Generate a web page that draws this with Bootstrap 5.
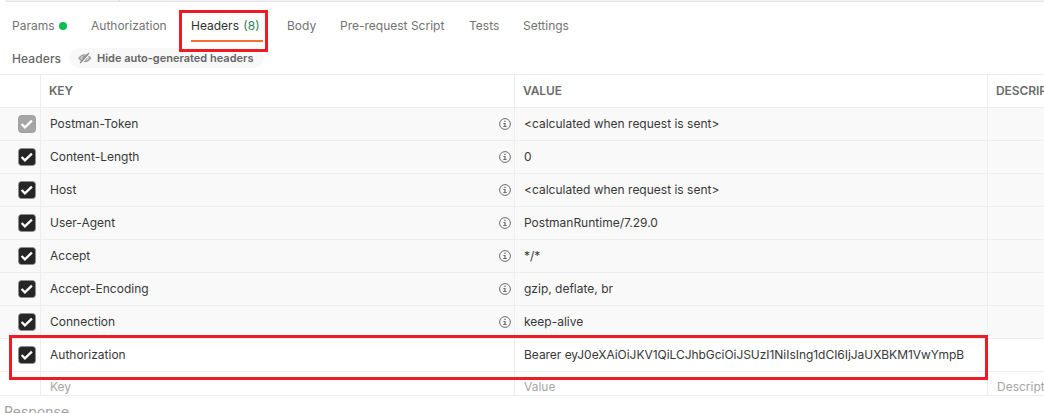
<!DOCTYPE html>
<html lang="en">
<head>
<meta charset="utf-8">
<title>Request headers</title>
<link rel="stylesheet" href="https://cdn.jsdelivr.net/npm/bootstrap@5.3.0/dist/css/bootstrap.min.css">
<style>
body{font-family:Inter,"Open Sans",sans-serif;font-size:12px;line-height:16px;color:#383838;background:#fff;height:413px;overflow:hidden}
.url-bar{height:2px;margin-left:5px;background:#f2f2f2;border-bottom:1px solid #e3e3e3;border-bottom-left-radius:3px}
.url-method{width:115px;border-right:1px solid #dcdcdc}
.request-tabs{height:46px;padding-left:12px;color:#737373}
.request-tabs .nav-link{padding:16px 0 6px;color:inherit;height:40px}
.request-tabs .nav-item{flex:none}
.tab-params{width:79px}.tab-auth{width:100px}.tab-headers{width:96px}.tab-body{width:53px}.tab-script{width:129px}.tab-tests{width:54px}
.request-tabs .nav-link.active{width:72px;border-bottom:2px solid #ff6c37;color:#303030}
.request-tabs .count{color:#2b8055;margin-left:1px}
.dot{width:8px;height:8px;background:#0cbb52;margin:4px 0 0 4.500px}
.sub-bar{height:26px;padding-left:12px}
.sub-title{width:57px;font-weight:500;font-size:12px;letter-spacing:.1px;color:#666;padding-top:3px}
.toggle-pill{height:20px;width:195px;background:#f8f8f8;font-size:11px;font-weight:600;color:#666;padding-left:9px}
.toggle-pill svg{margin-right:5px}
.kv-grid{border-top:1px solid #ededed}
.kv-row{display:grid;grid-template-columns:41px 474px 473px 1fr;height:33px;border-bottom:1px solid #ededed}
.kv-row>div{border-right:1px solid #ededed;padding-left:9px;display:flex;align-items:center;white-space:nowrap;overflow:hidden}
.kv-row>div:last-child{border-right:0}
.kv-row>div:first-child{padding-left:18px}
.kv-head{font-weight:600;color:#6b6b6b;letter-spacing:-.1px}
.kv-head>div{padding-left:8px}
.auto{background:#f9f9f9}
.token{letter-spacing:-.04px}
.kv-new{height:24px;color:#a6a6a6}
.kv-new>div{padding-top:7px}
.info{margin-left:auto;margin-right:3px}
.response{font-size:14px;line-height:20px;color:#a0a0a0;padding:6px 0 0 4px}
.mark-box{position:absolute;border:3px solid #ed1c24}
.mark-tab{left:179px;top:10px;width:89px;height:42px}
.mark-row{left:9px;top:335px;width:979px;height:45px}
</style>
</head>
<body>
<svg class="d-none">
<symbol id="check" viewBox="0 0 18 18"><rect x=".5" y=".5" width="17" height="17" rx="3" fill="currentColor" stroke="#8d8d8d" stroke-opacity=".7"/><path d="M3.600 9l3.300 3.300 7-6.700" fill="none" stroke="#fff" stroke-width="2.300"/></symbol>
<symbol id="info" viewBox="0 0 12 12"><circle cx="6" cy="6" r="5.4" fill="none" stroke="#6b6b6b"/><path d="M5.300 2.800h1.300v1.200h-1.300zM4.400 5h2.200v3.100h1v.9H4.300v-.9h1.100V5.900h-1z" fill="#6b6b6b"/></symbol>
</svg>
<div class="url-bar d-flex"><div class="url-method"></div></div>
<ul class="nav request-tabs flex-nowrap">
<li class="nav-item tab-params"><a class="nav-link d-flex align-items-start"><span>Params</span><span class="dot rounded-circle"></span></a></li>
<li class="nav-item tab-auth"><a class="nav-link">Authorization</a></li>
<li class="nav-item tab-headers"><a class="nav-link active">Headers <span class="count">(8)</span></a></li>
<li class="nav-item tab-body"><a class="nav-link">Body</a></li>
<li class="nav-item tab-script"><a class="nav-link">Pre-request Script</a></li>
<li class="nav-item tab-tests"><a class="nav-link">Tests</a></li>
<li class="nav-item"><a class="nav-link">Settings</a></li>
</ul>
<div class="sub-bar d-flex align-items-start">
<div class="sub-title">Headers</div>
<div class="toggle-pill rounded-pill d-flex align-items-center">
<svg width="14" height="12" viewBox="0 0 14 12"><path d="M1 6.200Q3.300 2.800 6.800 2.800T12.600 6.200Q10.300 9.600 6.800 9.600T1 6.200z" fill="#d0d0d0" stroke="#9b9b9b" stroke-width="1.300"/><circle cx="6.800" cy="6.200" r="2.300" fill="#969696"/><path d="M3.300 11.500L11.900 1.700" stroke="#f8f8f8" stroke-width="1.300"/><path d="M2.200 11L10.900 1" stroke="#8b8b8b" stroke-width="1.300"/></svg>
<span>Hide auto-generated headers</span></div>
</div>
<main class="kv-grid" id="grid">
<div class="kv-row kv-head"><div></div><div>KEY</div><div>VALUE</div><div>DESCRIPTION</div></div>
</main>
<div class="response">Response</div>
<div class="mark-box mark-tab"></div>
<div class="mark-box mark-row"></div>
<script src="https://cdn.jsdelivr.net/npm/bootstrap@5.3.0/dist/js/bootstrap.bundle.min.js"></script>
<script>
const calc='&lt;calculated when request is sent&gt;';
const rows=[['Postman-Token',calc],['Content-Length','0'],['Host',calc],['User-Agent','PostmanRuntime/7.29.0'],['Accept','*/*'],['Accept-Encoding','gzip, deflate, br'],['Connection','keep-alive'],['Authorization','Bearer eyJ0eXAiOiJKV1QiLCJhbGciOiJSUzI1NiIsIng1dCI6IjJaUXBKM1VwYmpB']];
const grid=document.getElementById('grid');
rows.forEach(([k,v],i)=>{
 const auto=i<7;
 grid.insertAdjacentHTML('beforeend',`<div class="kv-row ${auto?'auto':''}"><div><svg width="18" height="18" color="${i?'#262626':'#a6a6a6'}"><use href="#check"/></svg></div><div><span>${k}</span>${auto?'<svg class="info" width="12" height="12"><use href="#info"/></svg>':''}</div><div class="${auto?'':'token'}">${v}</div><div></div></div>`);
});
grid.insertAdjacentHTML('beforeend','<div class="kv-row kv-new"><div></div><div>Key</div><div>Value</div><div>Description</div></div>');
</script>
</body>
</html>
